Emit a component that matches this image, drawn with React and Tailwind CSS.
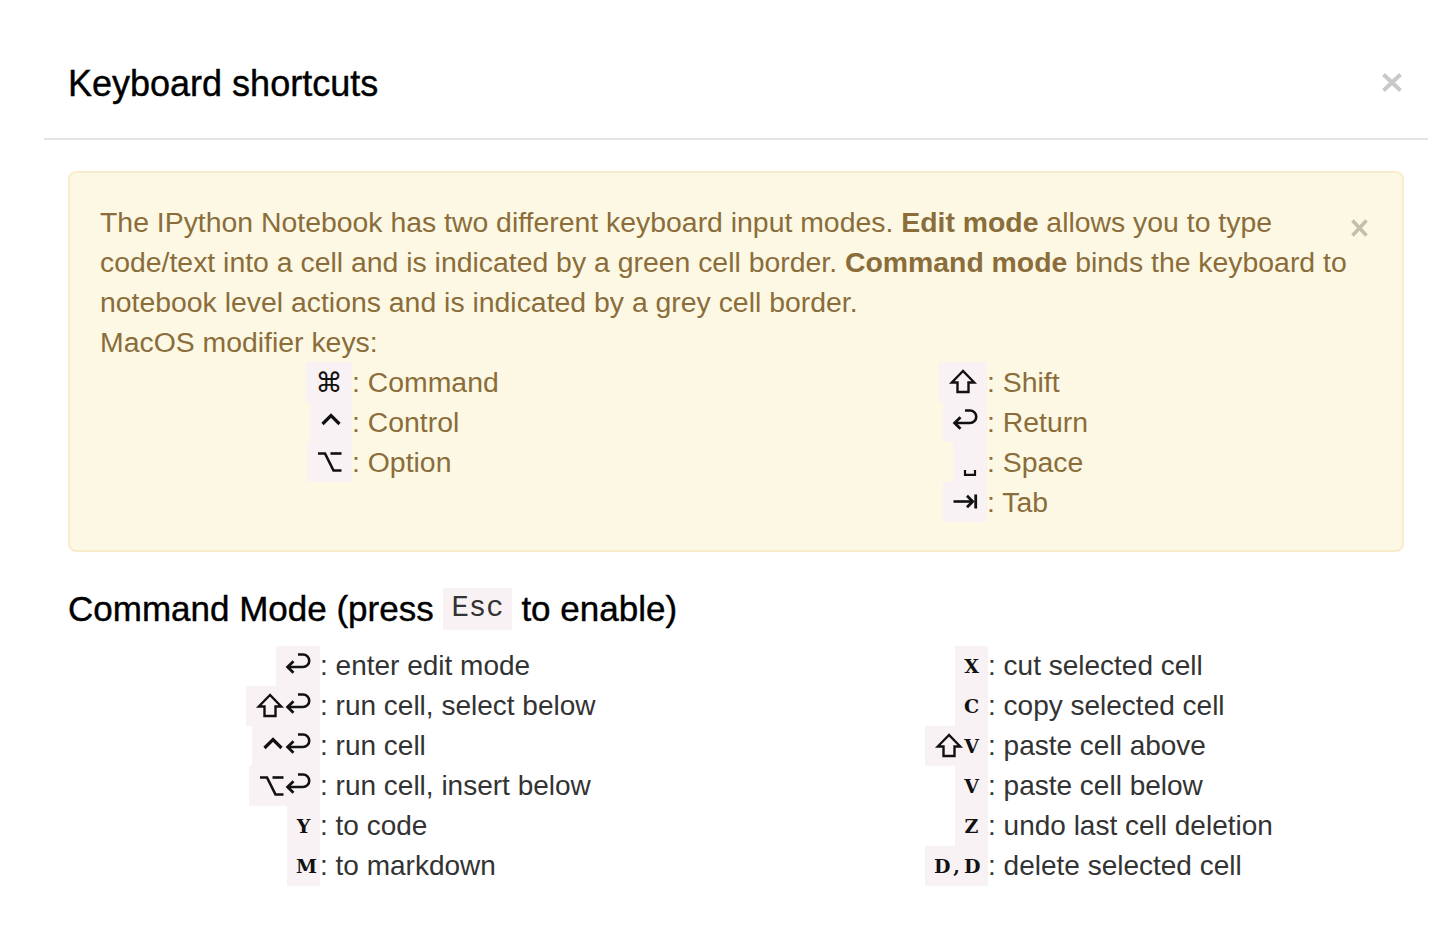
import React from "react";

const SW = 2.6;

function Glyph({ name }) {
  const common = {
    stroke: "#111",
    strokeWidth: SW,
    fill: "none",
    strokeLinejoin: "miter",
    strokeLinecap: "butt",
  };
  if (name === "cmd") {
    return (
      <span className="inline-block w-[28px] text-center font-['DejaVu_Sans',sans-serif] text-[27px] leading-none text-[#111]">
        ⌘
      </span>
    );
  }
  if (name === "ret") {
    return (
      <svg width="26" height="40" viewBox="0 0 26 40" className="block">
        <path d="M13 8.5 H18 A6.25 6.25 0 0 1 18 21 H3" {...common} />
        <path d="M8.5 15.2 L2.6 21 L8.5 26.8" {...common} strokeWidth={2.8} />
      </svg>
    );
  }
  if (name === "shift") {
    return (
      <svg width="30" height="40" viewBox="0 0 30 40" className="block">
        <path d="M15 9 L3.8 20.5 H9.5 V30 H20.5 V20.5 H26.2 Z" {...common} strokeWidth={2.4} />
      </svg>
    );
  }
  if (name === "ctrl") {
    return (
      <svg width="24" height="40" viewBox="0 0 24 40" className="block">
        <path d="M3.5 22 L12 13.5 L20.5 22" {...common} strokeWidth={3.2} />
      </svg>
    );
  }
  if (name === "opt") {
    return (
      <svg width="27" height="40" viewBox="0 0 27 40" className="block">
        <path d="M2 11.5 H9 L17.5 28.5 H25.5" {...common} />
        <path d="M14.5 11.5 H25.5" {...common} />
      </svg>
    );
  }
  if (name === "space") {
    return (
      <svg width="16" height="40" viewBox="0 0 16 40" className="block">
        <path d="M3 28 V32.8 H13 V28" {...common} strokeWidth={2.2} />
      </svg>
    );
  }
  if (name === "tab") {
    return (
      <svg width="26" height="40" viewBox="0 0 26 40" className="block">
        <path d="M1.5 19.5 H21" {...common} />
        <path d="M15 13.8 L20.7 19.5 L15 25.2" {...common} strokeWidth={2.8} />
        <path d="M23.7 12.5 V26.5" {...common} strokeWidth={2.8} />
      </svg>
    );
  }
  return null;
}

function Letters({ text }) {
  return (
    <span className="flex font-['DejaVu_Serif',serif] text-[19px] font-bold leading-none text-[#111]">
      {text.split("").map((ch, i) => (
        <span key={i} className="inline-block w-[15px] text-center">
          {ch}
        </span>
      ))}
    </span>
  );
}

function Row({ keys, label, labelClass }) {
  return (
    <div className="flex h-10 items-center">
      <div className="flex w-[252px] shrink-0 justify-end">
        <span className="flex h-10 items-center bg-[#f9f2f4] px-[9px]">
          {keys.map((k, i) =>
            k.t === "g" ? <Glyph key={i} name={k.c} /> : <Letters key={i} text={k.c} />
          )}
        </span>
      </div>
      <span className={"whitespace-nowrap leading-10 " + labelClass}>: {label}</span>
    </div>
  );
}

const g = (c) => ({ t: "g", c });
const l = (c) => ({ t: "l", c });

const modLeft = [
  { keys: [g("cmd")], label: "Command" },
  { keys: [g("ctrl")], label: "Control" },
  { keys: [g("opt")], label: "Option" },
];
const modRight = [
  { keys: [g("shift")], label: "Shift" },
  { keys: [g("ret")], label: "Return" },
  { keys: [g("space")], label: "Space" },
  { keys: [g("tab")], label: "Tab" },
];
const cmdLeft = [
  { keys: [g("ret")], label: "enter edit mode" },
  { keys: [g("shift"), g("ret")], label: "run cell, select below" },
  { keys: [g("ctrl"), g("ret")], label: "run cell" },
  { keys: [g("opt"), g("ret")], label: "run cell, insert below" },
  { keys: [l("Y")], label: "to code" },
  { keys: [l("M")], label: "to markdown" },
];
const cmdRight = [
  { keys: [l("X")], label: "cut selected cell" },
  { keys: [l("C")], label: "copy selected cell" },
  { keys: [g("shift"), l("V")], label: "paste cell above" },
  { keys: [l("V")], label: "paste cell below" },
  { keys: [l("Z")], label: "undo last cell deletion" },
  { keys: [l("D,D")], label: "delete selected cell" },
];

function CloseX({ w, h, color, sw }) {
  return (
    <svg width={w} height={h} viewBox={`0 0 ${w} ${h}`} className="block">
      <path
        d={`M1.5 1.5 L${w - 1.5} ${h - 1.5} M${w - 1.5} 1.5 L1.5 ${h - 1.5}`}
        stroke={color}
        strokeWidth={sw}
        fill="none"
      />
    </svg>
  );
}

export default function App() {
  return (
    <div className="h-[930px] w-[1438px] overflow-hidden bg-white font-['Liberation_Sans',Arial,sans-serif]">
      <div className="ml-[44px] w-[1384px]">
        <div className="relative h-[140px] border-b-2 border-[#e5e5e5] pl-6 pt-[64px]">
          <h4 className="text-[36px] leading-10 text-black [-webkit-text-stroke:0.4px_black]">
            Keyboard shortcuts
          </h4>
          <button className="absolute right-[26px] top-[73px]">
            <CloseX w={20} h={19} color="#c9c9c9" sw={4} />
          </button>
        </div>
        <div className="px-6 pt-[31px]">
          <div className="relative rounded-[8px] border-2 border-[#faebcc] bg-[#fcf8e3] pb-[28px] pl-[30px] pr-[32px] pt-[29px] text-[28.4px] leading-10 text-[#8a6d3b]">
            <button className="absolute right-[34px] top-[46px]">
              <CloseX w={17} h={18} color="#c2bfac" sw={3.5} />
            </button>
            <div className="whitespace-nowrap">
              The IPython Notebook has two different keyboard input modes. <b>Edit mode</b> allows you
              to type
            </div>
            <div className="whitespace-nowrap">
              code/text into a cell and is indicated by a green cell border. <b>Command mode</b> binds
              the keyboard to
            </div>
            <div className="whitespace-nowrap">
              notebook level actions and is indicated by a grey cell border.
            </div>
            <div className="whitespace-nowrap">MacOS modifier keys:</div>
            <div className="grid grid-cols-2">
              <div>
                {modLeft.map((r, i) => (
                  <Row key={i} keys={r.keys} label={r.label} labelClass="text-[#8a6d3b]" />
                ))}
              </div>
              <div>
                {modRight.map((r, i) => (
                  <Row key={i} keys={r.keys} label={r.label} labelClass="text-[#8a6d3b]" />
                ))}
              </div>
            </div>
          </div>
          <h4 className="mt-9 whitespace-nowrap text-[35px] leading-[42px] text-black [-webkit-text-stroke:0.4px_black]">
            Command Mode (press{" "}
            <span className="inline-block bg-[#f9f2f4] px-[8px] align-top font-['Liberation_Mono',monospace] text-[29px] leading-[42px] text-[#333] [-webkit-text-stroke:0px]">
              Esc
            </span>{" "}
            to enable)
          </h4>
          <div className="mt-4 grid grid-cols-2 text-[28px]">
            <div>
              {cmdLeft.map((r, i) => (
                <Row key={i} keys={r.keys} label={r.label} labelClass="text-[#333]" />
              ))}
            </div>
            <div>
              {cmdRight.map((r, i) => (
                <Row key={i} keys={r.keys} label={r.label} labelClass="text-[#333]" />
              ))}
            </div>
          </div>
        </div>
      </div>
    </div>
  );
}
